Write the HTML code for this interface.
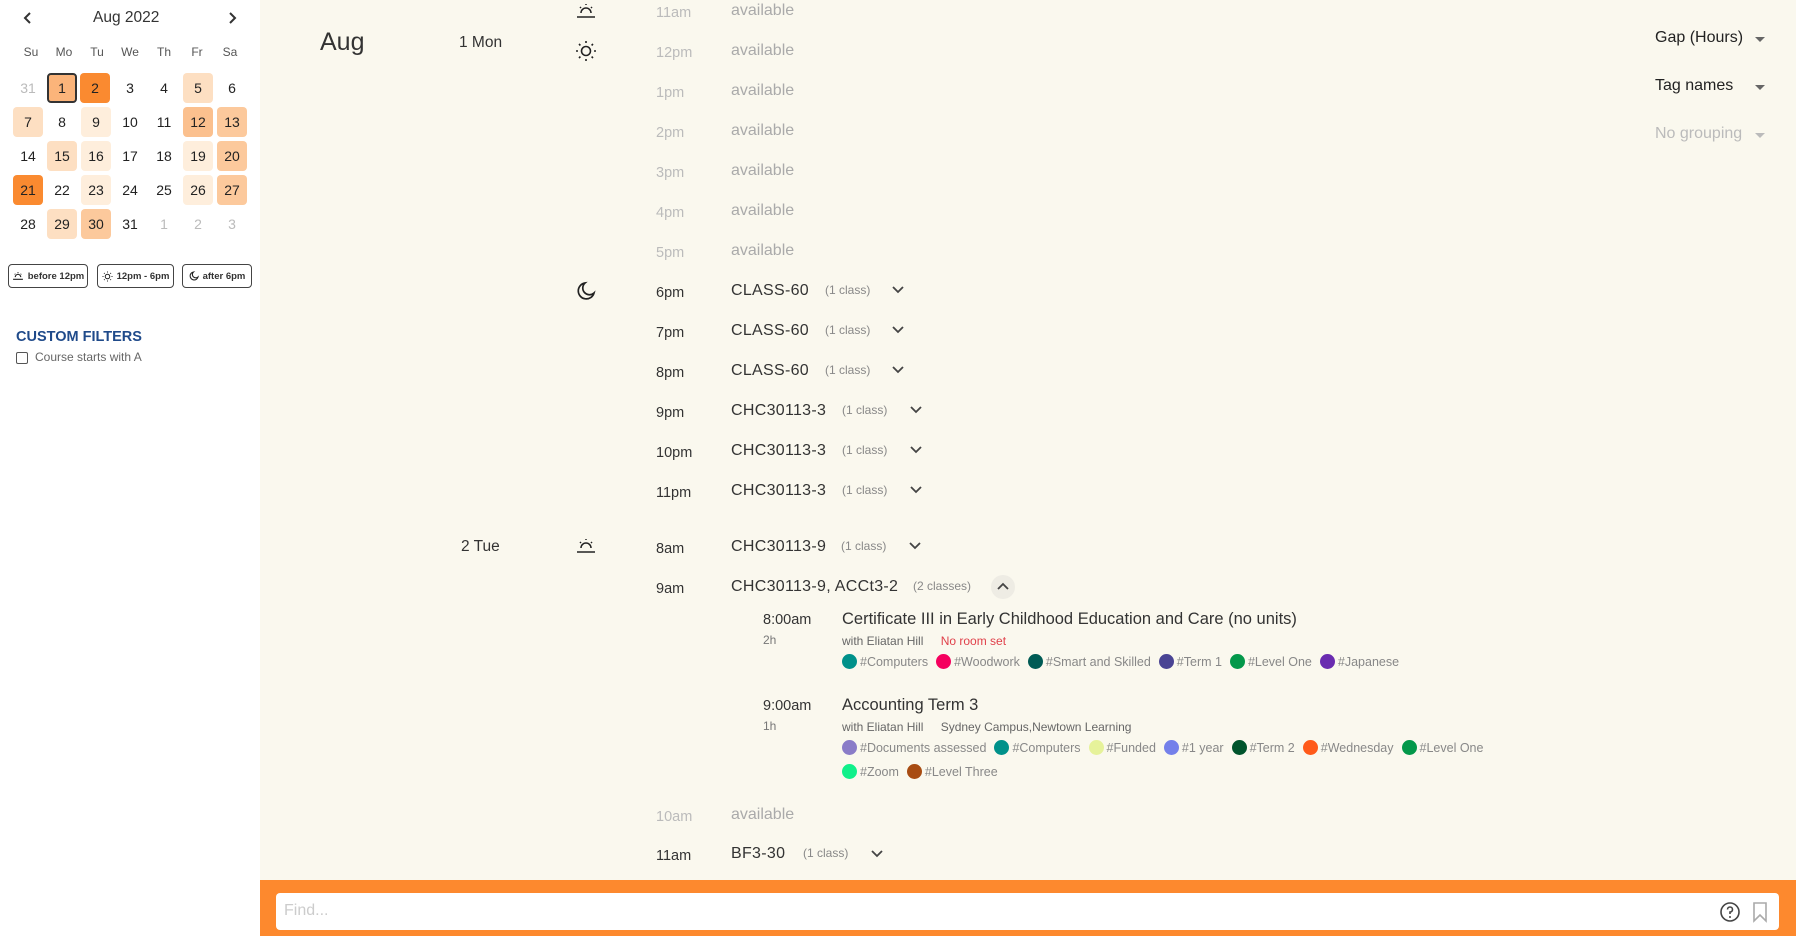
<!DOCTYPE html>
<html><head><meta charset="utf-8"><style>
*{margin:0;padding:0;box-sizing:border-box}
body{width:1796px;height:936px;overflow:hidden;background:#faf8ee;font-family:"Liberation Sans",sans-serif;position:relative;color:#222}
.a{position:absolute;white-space:nowrap}
#side{position:absolute;left:0;top:0;width:260px;height:936px;background:#fff}
.wd{position:absolute;top:45px;width:34px;text-align:center;font-size:12px;color:#555}
.c{position:absolute;width:30px;height:30px;line-height:31px;text-align:center;font-size:14px;border-radius:4px;color:#222}
.g{color:#bbb}
.s1{background:#fa8a30}.s2{background:#fbc08e}.s3{background:#fddfc2}.s4{background:#feeedc}
.btn{position:absolute;top:264px;height:24px;border:1.5px solid #444;border-radius:4px;font-size:9.5px;font-weight:bold;line-height:21px;color:#333;display:flex;align-items:center;justify-content:center;gap:4px}
.t{position:absolute;left:656px;font-size:14.5px;line-height:20px;color:#333}
.t.l{color:#bbb}
.v{position:absolute;left:731px;font-size:16px;line-height:20px;color:#aaa}
.n{position:absolute;left:731px;font-size:16px;line-height:20px;color:#333;letter-spacing:.3px}
.k{position:absolute;font-size:12px;line-height:20px;color:#888}
.tag{display:inline-flex;align-items:center;margin-right:8px;font-size:12.5px;color:#888}
.tag i{display:inline-block;width:15px;height:15px;border-radius:50%;margin-right:3px}
.dd{position:absolute;left:1655px;font-size:16px;color:#222}
.dd b{position:absolute;left:100px;top:8px;border:5px solid transparent;border-top:5px solid #666}
</style></head><body>
<div id="side">
<svg class="a" style="left:22px;top:11px" width="12" height="14" viewBox="0 0 12 14"><path d="M8 2 L3 7 L8 12" fill="none" stroke="#333" stroke-width="2"/></svg>
<div class="a" style="left:93px;top:9px;font-size:15.5px;color:#333">Aug 2022</div>
<svg class="a" style="left:226px;top:11px" width="12" height="14" viewBox="0 0 12 14"><path d="M4 2 L9 7 L4 12" fill="none" stroke="#333" stroke-width="2"/></svg>
<div class="wd" style="left:14px">Su</div><div class="wd" style="left:47px">Mo</div><div class="wd" style="left:80px">Tu</div><div class="wd" style="left:113px">We</div><div class="wd" style="left:147px">Th</div><div class="wd" style="left:180px">Fr</div><div class="wd" style="left:213px">Sa</div>
<div class="c g" style="left:13px;top:73px">31</div>
<div class="c" style="left:47px;top:73px;background:#fbb47a;border:2px solid #333;line-height:27px">1</div>
<div class="c s1" style="left:80px;top:73px">2</div>
<div class="c" style="left:115px;top:73px">3</div>
<div class="c" style="left:149px;top:73px">4</div>
<div class="c s3" style="left:183px;top:73px">5</div>
<div class="c" style="left:217px;top:73px">6</div>
<div class="c s3" style="left:13px;top:107px">7</div>
<div class="c" style="left:47px;top:107px">8</div>
<div class="c s4" style="left:81px;top:107px">9</div>
<div class="c" style="left:115px;top:107px">10</div>
<div class="c" style="left:149px;top:107px">11</div>
<div class="c s2" style="left:183px;top:107px">12</div>
<div class="c" style="left:217px;top:107px;background:#fcc99c">13</div>
<div class="c" style="left:13px;top:141px">14</div>
<div class="c s3" style="left:47px;top:141px">15</div>
<div class="c s4" style="left:81px;top:141px">16</div>
<div class="c" style="left:115px;top:141px">17</div>
<div class="c" style="left:149px;top:141px">18</div>
<div class="c s4" style="left:183px;top:141px">19</div>
<div class="c" style="left:217px;top:141px;background:#fcc99c">20</div>
<div class="c s1" style="left:13px;top:175px">21</div>
<div class="c" style="left:47px;top:175px">22</div>
<div class="c s4" style="left:81px;top:175px">23</div>
<div class="c" style="left:115px;top:175px">24</div>
<div class="c" style="left:149px;top:175px">25</div>
<div class="c s4" style="left:183px;top:175px">26</div>
<div class="c" style="left:217px;top:175px;background:#fcc99c">27</div>
<div class="c" style="left:13px;top:209px">28</div>
<div class="c s3" style="left:47px;top:209px">29</div>
<div class="c" style="left:81px;top:209px;background:#fcc99c">30</div>
<div class="c" style="left:115px;top:209px">31</div>
<div class="c g" style="left:149px;top:209px">1</div>
<div class="c g" style="left:183px;top:209px">2</div>
<div class="c g" style="left:217px;top:209px">3</div>
<div class="btn" style="left:8px;width:80px"><svg width="12" height="10" viewBox="0 0 22 18"><path d="M2 15 H20 M6 11 A5 5 0 0 1 16 11" fill="none" stroke="#222" stroke-width="2"/><path d="M11 2v2M5 5l1 1M17 5l-1 1" stroke="#222" stroke-width="2"/></svg>before 12pm</div>
<div class="btn" style="left:97px;width:77px"><svg width="11" height="11" viewBox="0 0 22 22"><circle cx="11" cy="11" r="4.5" fill="none" stroke="#222" stroke-width="2"/><path d="M11 1v2M11 19v2M1 11h2M19 11h2M4 4l1.4 1.4M16.6 16.6L18 18M4 18l1.4-1.4M16.6 5.4L18 4" stroke="#222" stroke-width="2"/></svg>12pm - 6pm</div>
<div class="btn" style="left:182px;width:70px"><svg width="10" height="10" viewBox="0 0 20 20"><path d="M9 2 A8 8 0 1 0 18 12 A6.5 6.5 0 0 1 9 2Z" fill="none" stroke="#222" stroke-width="2.2"/></svg>after 6pm</div>
<div class="a" style="left:16px;top:329px;font-size:14.5px;font-weight:bold;color:#1f4a8a">CUSTOM FILTERS</div>
<div class="a" style="left:16px;top:352px;width:12px;height:12px;border:1.5px solid #555;border-radius:2px"></div>
<div class="a" style="left:35px;top:350px;font-size:12px;color:#666">Course starts with A</div>
</div>

<div class="a" style="left:320px;top:28px;font-size:25px;color:#333">Aug</div>
<div class="a" style="left:459px;top:34px;font-size:15.5px;color:#333">1 Mon</div>
<div class="a" style="left:461px;top:538px;font-size:15.5px;color:#333">2 Tue</div>

<svg class="a" style="left:575px;top:2px" width="22" height="18" viewBox="0 0 22 18"><path d="M2 15 H20 M6 11 A5 5 0 0 1 16 11" fill="none" stroke="#222" stroke-width="1.5"/><path d="M11 2v1M5 5l1 1M17 5l-1 1" stroke="#222" stroke-width="1.5"/></svg>
<svg class="a" style="left:575px;top:40px" width="22" height="22" viewBox="0 0 22 22"><circle cx="11" cy="11" r="4.5" fill="none" stroke="#222" stroke-width="1.6"/><path d="M11 1v2M11 19v2M1 11h2M19 11h2M4 4l1.4 1.4M16.6 16.6L18 18M4 18l1.4-1.4M16.6 5.4L18 4" stroke="#222" stroke-width="1.6"/></svg>
<svg class="a" style="left:576px;top:281px" width="20" height="20" viewBox="0 0 20 20"><path d="M9 2 A8 8 0 1 0 18 12 A6.5 6.5 0 0 1 9 2Z" fill="none" stroke="#222" stroke-width="1.7"/></svg>
<svg class="a" style="left:575px;top:537px" width="22" height="18" viewBox="0 0 22 18"><path d="M2 15 H20 M6 11 A5 5 0 0 1 16 11" fill="none" stroke="#222" stroke-width="1.5"/><path d="M11 2v1M5 5l1 1M17 5l-1 1" stroke="#222" stroke-width="1.5"/></svg>

<div class="t l" style="top:3px">11am</div><div class="v" style="top:1px">available</div>
<div class="t l" style="top:43px">12pm</div><div class="v" style="top:41px">available</div>
<div class="t l" style="top:83px">1pm</div><div class="v" style="top:81px">available</div>
<div class="t l" style="top:123px">2pm</div><div class="v" style="top:121px">available</div>
<div class="t l" style="top:163px">3pm</div><div class="v" style="top:161px">available</div>
<div class="t l" style="top:203px">4pm</div><div class="v" style="top:201px">available</div>
<div class="t l" style="top:243px">5pm</div><div class="v" style="top:241px">available</div>

<div class="t" style="top:283px">6pm</div><div class="n" style="top:281px">CLASS-60</div><div class="k" style="left:825px;top:280px">(1 class)</div>
<div class="t" style="top:323px">7pm</div><div class="n" style="top:321px">CLASS-60</div><div class="k" style="left:825px;top:320px">(1 class)</div>
<div class="t" style="top:363px">8pm</div><div class="n" style="top:361px">CLASS-60</div><div class="k" style="left:825px;top:360px">(1 class)</div>
<div class="t" style="top:403px">9pm</div><div class="n" style="top:401px">CHC30113-3</div><div class="k" style="left:842px;top:400px">(1 class)</div>
<div class="t" style="top:443px">10pm</div><div class="n" style="top:441px">CHC30113-3</div><div class="k" style="left:842px;top:440px">(1 class)</div>
<div class="t" style="top:483px">11pm</div><div class="n" style="top:481px">CHC30113-3</div><div class="k" style="left:842px;top:480px">(1 class)</div>
<div class="t" style="top:539px">8am</div><div class="n" style="top:537px">CHC30113-9</div><div class="k" style="left:841px;top:536px">(1 class)</div>
<div class="t" style="top:579px">9am</div><div class="n" style="top:577px">CHC30113-9, ACCt3-2</div><div class="k" style="left:913px;top:576px">(2 classes)</div>
<div class="a" style="left:991px;top:575px;width:24px;height:24px;border-radius:50%;background:#eeece4"></div>
<svg class="a" style="left:996px;top:580px" width="14" height="14" viewBox="0 0 14 14"><path d="M2 9 L7 4 L12 9" fill="none" stroke="#444" stroke-width="1.8"/></svg>

<svg class="a" style="left:891px;top:284px" width="14" height="12" viewBox="0 0 14 12"><path d="M2 3 L7 8 L12 3" fill="none" stroke="#444" stroke-width="1.8"/></svg>
<svg class="a" style="left:891px;top:324px" width="14" height="12" viewBox="0 0 14 12"><path d="M2 3 L7 8 L12 3" fill="none" stroke="#444" stroke-width="1.8"/></svg>
<svg class="a" style="left:891px;top:364px" width="14" height="12" viewBox="0 0 14 12"><path d="M2 3 L7 8 L12 3" fill="none" stroke="#444" stroke-width="1.8"/></svg>
<svg class="a" style="left:909px;top:404px" width="14" height="12" viewBox="0 0 14 12"><path d="M2 3 L7 8 L12 3" fill="none" stroke="#444" stroke-width="1.8"/></svg>
<svg class="a" style="left:909px;top:444px" width="14" height="12" viewBox="0 0 14 12"><path d="M2 3 L7 8 L12 3" fill="none" stroke="#444" stroke-width="1.8"/></svg>
<svg class="a" style="left:909px;top:484px" width="14" height="12" viewBox="0 0 14 12"><path d="M2 3 L7 8 L12 3" fill="none" stroke="#444" stroke-width="1.8"/></svg>
<svg class="a" style="left:908px;top:540px" width="14" height="12" viewBox="0 0 14 12"><path d="M2 3 L7 8 L12 3" fill="none" stroke="#444" stroke-width="1.8"/></svg>
<svg class="a" style="left:870px;top:848px" width="14" height="12" viewBox="0 0 14 12"><path d="M2 3 L7 8 L12 3" fill="none" stroke="#444" stroke-width="1.8"/></svg>

<div class="a" style="left:763px;top:612px;font-size:14.5px;color:#333">8:00am</div>
<div class="a" style="left:763px;top:633px;font-size:12px;color:#777">2h</div>
<div class="a" style="left:842px;top:610px;font-size:16.5px;color:#333">Certificate III in Early Childhood Education and Care (no units)</div>
<div class="a" style="left:842px;top:634px;font-size:12px;color:#666">with Eliatan Hill <span style="color:#e0404a;margin-left:14px">No room set</span></div>
<div class="a" style="left:842px;top:654px">
<span class="tag"><i style="background:#00918a"></i>#Computers</span><span class="tag"><i style="background:#f5005e"></i>#Woodwork</span><span class="tag"><i style="background:#005b55"></i>#Smart and Skilled</span><span class="tag"><i style="background:#4a4494"></i>#Term 1</span><span class="tag"><i style="background:#03984a"></i>#Level One</span><span class="tag"><i style="background:#6a2cb0"></i>#Japanese</span>
</div>
<div class="a" style="left:763px;top:698px;font-size:14.5px;color:#333">9:00am</div>
<div class="a" style="left:763px;top:719px;font-size:12px;color:#777">1h</div>
<div class="a" style="left:842px;top:696px;font-size:16.5px;color:#333">Accounting Term 3</div>
<div class="a" style="left:842px;top:720px;font-size:12px;color:#666">with Eliatan Hill <span style="margin-left:14px">Sydney Campus,Newtown Learning</span></div>
<div class="a" style="left:842px;top:740px">
<span class="tag"><i style="background:#8a7cc8"></i>#Documents assessed</span><span class="tag"><i style="background:#00918a"></i>#Computers</span><span class="tag"><i style="background:#e6f29a"></i>#Funded</span><span class="tag"><i style="background:#7480ea"></i>#1 year</span><span class="tag"><i style="background:#00542c"></i>#Term 2</span><span class="tag"><i style="background:#ff5a1a"></i>#Wednesday</span><span class="tag"><i style="background:#03984a"></i>#Level One</span>
</div>
<div class="a" style="left:842px;top:764px">
<span class="tag"><i style="background:#10f08a"></i>#Zoom</span><span class="tag"><i style="background:#a84c12"></i>#Level Three</span>
</div>

<div class="t l" style="top:807px">10am</div><div class="v" style="top:805px">available</div>
<div class="t" style="top:846px">11am</div><div class="n" style="top:844px">BF3-30</div><div class="k" style="left:803px;top:843px">(1 class)</div>

<div class="dd" style="top:29px">Gap (Hours)<b></b></div>
<div class="dd" style="top:77px">Tag names<b></b></div>
<div class="dd" style="top:125px;color:#bbb">No grouping<b style="border-top-color:#bbb"></b></div>

<div class="a" style="left:260px;top:880px;width:1536px;height:56px;background:#fd892e"></div>
<div class="a" style="left:276px;top:893px;width:1503px;height:37px;background:#fff;border-radius:4px"></div>
<div class="a" style="left:284px;top:902px;font-size:16px;color:#ccc">Find...</div>
<svg class="a" style="left:1718px;top:900px" width="24" height="24" viewBox="0 0 24 24"><circle cx="12" cy="12" r="9" fill="none" stroke="#444" stroke-width="1.6"/><path d="M9.5 9.5 A2.5 2.5 0 1 1 12 12 V14" fill="none" stroke="#444" stroke-width="1.6"/><circle cx="12" cy="17" r="1" fill="#444"/></svg>
<svg class="a" style="left:1752px;top:901px" width="16" height="22" viewBox="0 0 16 22"><path d="M2 2 H14 V20 L8 14 L2 20Z" fill="none" stroke="#aaa" stroke-width="1.6"/></svg>
</body></html>
